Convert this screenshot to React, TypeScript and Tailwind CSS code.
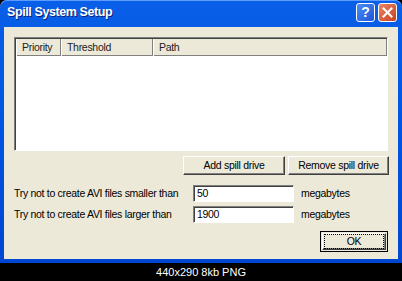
import React from 'react';

const ui = { fontFamily: '"Liberation Sans", Arial, sans-serif' };

function Raised({ children, className = '' }: { children: React.ReactNode; className?: string }) {
  return (
    <div
      className={`border border-t-white border-l-white border-r-[#404040] border-b-[#404040] bg-[#ECE9D8] shadow-[inset_-1px_-1px_0_#808080] flex items-center justify-center text-[10.5px] tracking-[-0.3px] text-black ${className}`}
    >
      {children}
    </div>
  );
}

function Field({ value }: { value: string }) {
  return (
    <div className="w-[101px] h-[17px] border border-t-[#808080] border-l-[#808080] border-r-white border-b-white bg-white shadow-[inset_1px_1px_0_#404040] flex items-center pl-[3px] text-[10.5px] tracking-[-0.3px] text-black">
      {value}
    </div>
  );
}

function HeaderCell({ label, className = '' }: { label: string; className?: string }) {
  return (
    <div
      className={`h-full border-l border-l-white border-r border-r-[#808080] shadow-[inset_0_-1px_0_#808080] flex items-center pl-[5px] text-[10.5px] tracking-[-0.3px] text-[#222] ${className}`}
    >
      {label}
    </div>
  );
}

export default function App() {
  return (
    <div className="w-[402px] h-[281px] bg-black flex flex-col" style={ui}>
      {/* window */}
      <div className="h-[263px] rounded-t-[7px] bg-gradient-to-b from-[#0A5FE8] via-[#0054E3] to-[#0046D0] flex flex-col px-[4px] pb-[4px] shadow-[inset_0_1px_0_#5C9CFF]">
        {/* title bar */}
        <div className="h-[23px] flex items-center justify-between pl-[3px] pr-[1px] pt-[1px]">
          <span className="text-white font-bold text-[12.5px] tracking-[-0.4px] [text-shadow:1px_1px_0_#0A1E78]">
            Spill System Setup
          </span>
          <div className="flex gap-[3px]">
            <div className="w-[19px] h-[19px] rounded-[3px] border border-white bg-gradient-to-br from-[#4C8DF8] to-[#1D55D8] flex items-center justify-center text-white font-bold text-[14px] leading-none">
              ?
            </div>
            <div className="w-[19px] h-[19px] rounded-[3px] border border-white bg-gradient-to-br from-[#EB8465] to-[#C7401C] flex items-center justify-center">
              <svg width="11" height="11" viewBox="0 0 11 11">
                <path d="M1.5 1.5 L9.5 9.5 M9.5 1.5 L1.5 9.5" stroke="white" strokeWidth="2" strokeLinecap="square" />
              </svg>
            </div>
          </div>
        </div>
        {/* client area */}
        <div className="flex-1 bg-[#ECE9D8] flex flex-col px-[10px] pt-[10px] mt-[4px]">
          {/* list view */}
          <div className="h-[114px] border border-t-[#808080] border-l-[#808080] border-r-white border-b-white shadow-[inset_1px_1px_0_#404040] bg-white pl-[1px] pt-[1px] flex flex-col">
            <div className="h-[17px] flex bg-[#ECE9D8]">
              <HeaderCell label="Priority" className="w-[45px]" />
              <HeaderCell label="Threshold" className="w-[92px]" />
              <HeaderCell label="Path" className="flex-1" />
            </div>
          </div>
          {/* buttons */}
          <div className="flex justify-end gap-[3px] mt-[5px] -mr-[1px]">
            <Raised className="w-[102px] h-[19px]">Add spill drive</Raised>
            <Raised className="w-[101px] h-[19px]">Remove spill drive</Raised>
          </div>
          {/* size rows */}
          <div className="flex flex-col gap-[4px] mt-[10px]">
            <div className="flex items-center">
              <span className="w-[179px] whitespace-nowrap text-[10.5px] tracking-[-0.3px] text-black">Try not to create AVI files smaller than</span>
              <Field value="50" />
              <span className="ml-[7px] text-[10.5px] tracking-[-0.3px] text-black">megabytes</span>
            </div>
            <div className="flex items-center">
              <span className="w-[179px] whitespace-nowrap text-[10.5px] tracking-[-0.3px] text-black">Try not to create AVI files larger than</span>
              <Field value="1900" />
              <span className="ml-[7px] text-[10.5px] tracking-[-0.3px] text-black">megabytes</span>
            </div>
          </div>
          {/* OK */}
          <div className="flex justify-end mt-[8px]">
            <div className="w-[68px] h-[21px] border border-black p-px">
              <Raised className="w-full h-full">
                <div className="w-[58px] h-[13px] outline outline-1 outline-dotted outline-black flex items-center justify-center">OK</div>
              </Raised>
            </div>
          </div>
        </div>
      </div>
      {/* caption */}
      <div className="flex-1 flex items-center justify-center text-white text-[11px]">440x290 8kb PNG</div>
    </div>
  );
}
